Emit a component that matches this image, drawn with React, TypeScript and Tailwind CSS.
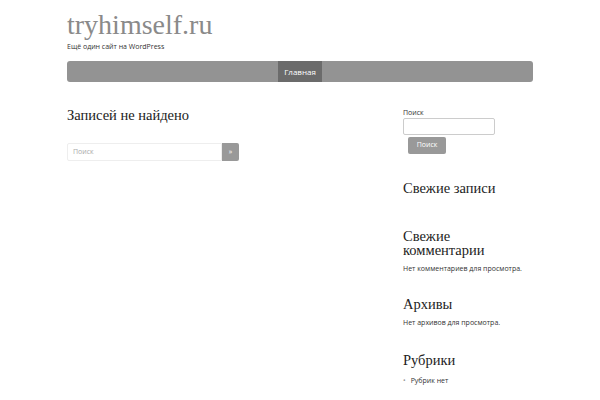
import React from 'react'

const serif = { fontFamily: '"Liberation Serif", serif' }

function Widget({ title, gap = 'mt-[23px]', children }: { title: string; gap?: string; children?: React.ReactNode }) {
  return (
    <div className={gap}>
      <h2 className="text-[14.5px] leading-[14px] text-[#222]" style={serif}>{title}</h2>
      {children}
    </div>
  )
}

export default function App() {
  return (
    <div className="min-h-[400px] bg-white font-['Open_Sans',sans-serif] text-[#333]">
      <div className="mx-auto w-[466px]">
        <header className="pt-[8px]">
          <h1 className="text-[28px] leading-[34px] text-[#8a8a8a]" style={serif}>tryhimself.ru</h1>
          <p className="text-[7px] leading-[10px] text-[#333]">Ещё один сайт на WordPress</p>
        </header>
        <nav className="mt-[9px] flex h-[21px] justify-center rounded-[3px] bg-[#939393]">
          <a className="flex items-center bg-[#6b6b6b] px-[6px] text-[8px] text-white">Главная</a>
        </nav>
        <div className="mt-[23px] flex items-start justify-between">
          <main className="w-[173px]">
            <h1 className="text-[14.5px] leading-[20px] text-[#222]" style={serif}>Записей не найдено</h1>
            <form className="mt-[18px] flex h-[18px]">
              <input
                placeholder="Поиск"
                className="w-[155px] rounded-l-[2px] border border-[#eee] px-[5px] text-[7px] text-[#333] placeholder:text-[#aaa] outline-none"
              />
              <button className="w-[17px] rounded-r-[2px] bg-[#999] text-[7px] text-white">»</button>
            </form>
          </main>
          <aside className="w-[130px] pb-6 pt-[3px]">
            <div>
              <label className="block text-[7px] leading-[9px] text-[#333]">Поиск</label>
              <input className="mt-[1px] block h-[17px] w-[92px] rounded-[2px] border border-[#ccc] outline-none" />
              <button className="ml-[5px] mt-[2px] block h-[17px] w-[38px] rounded-[2px] bg-[#999] text-[7px] text-white">Поиск</button>
            </div>
            <Widget title="Свежие записи" gap="mt-[27px]" />
            <Widget title="Свежие комментарии" gap="mt-[34px]">
              <p className="mt-[7px] text-[7px] leading-[10px] text-[#333]">Нет комментариев для просмотра.</p>
            </Widget>
            <Widget title="Архивы">
              <p className="mt-[7px] text-[7px] leading-[10px] text-[#333]">Нет архивов для просмотра.</p>
            </Widget>
            <Widget title="Рубрики" gap="mt-[25px]">
              <ul className="mt-[9px] text-[7px] leading-[10px] text-[#333]">
                <li className="flex items-center gap-[5px]"><span className="text-[#999]">•</span>Рубрик нет</li>
              </ul>
            </Widget>
          </aside>
        </div>
      </div>
    </div>
  )
}
